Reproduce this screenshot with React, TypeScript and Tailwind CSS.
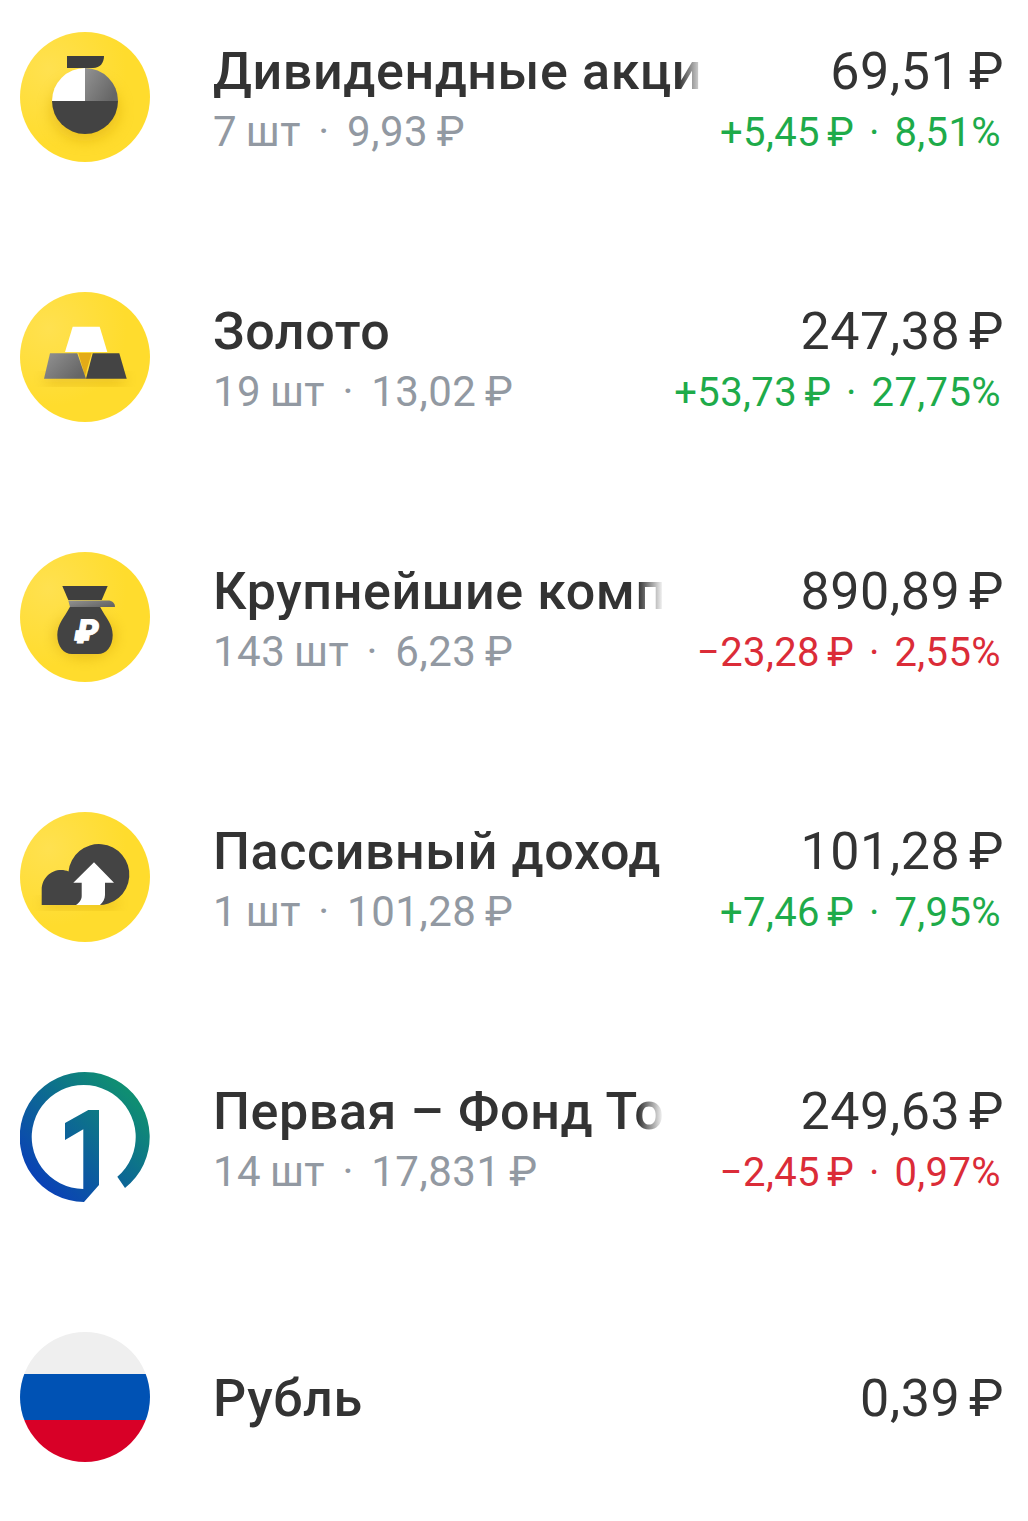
import React from 'react';

interface Row {
  name: string;
  titleWidth?: number;
  sub?: string;
  price: string;
  change?: string;
  up?: boolean;
  icon: React.ReactNode;
}

function YellowCircle({ id, children }: { id: string; children: React.ReactNode }) {
  return (
    <svg width="130" height="130" viewBox="0 0 130 130" className="block">
      <defs>
        <radialGradient id={`${id}-bg`} cx="0.22" cy="0.28" r="0.6">
          <stop offset="0" stopColor="#FFE150" />
          <stop offset="1" stopColor="#FFDC2D" />
        </radialGradient>
        <linearGradient id={`${id}-grey`} x1="0" y1="0" x2="1" y2="0.6">
          <stop offset="0" stopColor="#929292" />
          <stop offset="1" stopColor="#666666" />
        </linearGradient>
        <filter id={`${id}-blur`} x="-30%" y="-30%" width="160%" height="160%">
          <feGaussianBlur stdDeviation="7" />
        </filter>
      </defs>
      <circle cx="65" cy="65" r="65" fill={`url(#${id}-bg)`} />
      {children}
    </svg>
  );
}

function DividendIcon() {
  return (
    <YellowCircle id="div">
      <ellipse cx="65" cy="78" rx="35" ry="31" fill="#d9a90f" opacity="0.5" filter="url(#div-blur)" />
      <path d="M47 24H84C84 31 80 36 73 36H47Z" fill="#3d3d3d" />
      <path d="M65 69V36A33 33 0 0 0 32 69Z" fill="#ffffff" />
      <path d="M65 69V36A33 33 0 0 1 98 69Z" fill="url(#div-grey)" />
      <path d="M32 69A33 33 0 0 0 98 69Z" fill="#434343" />
    </YellowCircle>
  );
}

function GoldIcon() {
  return (
    <YellowCircle id="gold">
      <rect x="26" y="82" width="78" height="10" fill="#c9980c" opacity="0.45" filter="url(#gold-blur)" />
      <path d="M52.7 34.7H79.7L87.3 60H45Z" fill="#ffffff" />
      <path d="M58.3 61H71.7L65 84Z" fill="#e3ab17" />
      <path d="M30 61.3H57.3L66 86.7H24Z" fill="url(#gold-grey)" />
      <path d="M72.7 61.3H99.3L106.7 86.7H66Z" fill="#444444" />
    </YellowCircle>
  );
}

function BagIcon() {
  return (
    <YellowCircle id="bag">
      <ellipse cx="65" cy="84" rx="30" ry="22" fill="#c9980c" opacity="0.45" filter="url(#bag-blur)" />
      <path d="M42.3 34H87.7L81.7 48H48.3Z" fill="#3f3f3f" />
      <path d="M50 54.7C44 66 37.3 72 37.3 83C37.3 95 44 102 52 102H78C86 102 92.7 95 92.7 83C92.7 72 86 66 80 54.7Z" fill="#434343" />
      <path d="M48.3 48.5H88C92 48.5 95 51 95 55H50Z" fill="url(#bag-grey)" />
      <text
        transform="translate(65 91) skewX(-10)"
        textAnchor="middle"
        fill="#ffffff"
        stroke="#ffffff"
        strokeWidth="1"
        fontSize="33"
        fontWeight="900"
        fontFamily="Roboto, sans-serif"
      >
        ₽
      </text>
    </YellowCircle>
  );
}

function CloudIcon() {
  return (
    <YellowCircle id="cloud">
      <rect x="24" y="86" width="72" height="10" fill="#c9980c" opacity="0.45" filter="url(#cloud-blur)" />
      <path d="M21.7 93V78C21.7 66 31 58 41 58C44 58 46.5 58.5 48.5 59.5A30.5 30.5 0 1 1 76.7 93Z" fill="#444444" />
      <path d="M74 50.3L53.3 70.7H61.7V84C61.7 88 59 91 56 93H80C83 90 85 87 85 83V70.7H94Z" fill="#ffffff" />
    </YellowCircle>
  );
}

function FundIcon() {
  return (
    <svg width="130" height="130" viewBox="0 0 130 130" className="block">
      <defs>
        <linearGradient id="fund" gradientUnits="userSpaceOnUse" x1="22" y1="115" x2="112" y2="25">
          <stop offset="0" stopColor="#0A41B6" />
          <stop offset="1" stopColor="#0F8E72" />
        </linearGradient>
      </defs>
      <path
        d="M64 130A65 65 0 1 1 105 116L97.3 104.7A52 52 0 1 0 63.3 117V57.3L45 68V51L68.3 38H79V113Z"
        fill="url(#fund)"
      />
    </svg>
  );
}

function FlagIcon() {
  return (
    <div className="flex h-[130px] w-[130px] flex-col overflow-hidden rounded-full">
      <div className="h-[42px] bg-[#EFEFEF]" />
      <div className="h-[46px] bg-[#0052B4]" />
      <div className="flex-1 bg-[#D80027]" />
    </div>
  );
}

const rows: Row[] = [
  {
    name: 'Дивидендные акции',
    titleWidth: 492,
    sub: '7 шт  ·  9,93 ₽',
    price: '69,51 ₽',
    change: '+5,45 ₽  ·  8,51%',
    up: true,
    icon: <DividendIcon />,
  },
  {
    name: 'Золото',
    sub: '19 шт  ·  13,02 ₽',
    price: '247,38 ₽',
    change: '+53,73 ₽  ·  27,75%',
    up: true,
    icon: <GoldIcon />,
  },
  {
    name: 'Крупнейшие компании',
    titleWidth: 451,
    sub: '143 шт  ·  6,23 ₽',
    price: '890,89 ₽',
    change: '−23,28 ₽  ·  2,55%',
    up: false,
    icon: <BagIcon />,
  },
  {
    name: 'Пассивный доход',
    sub: '1 шт  ·  101,28 ₽',
    price: '101,28 ₽',
    change: '+7,46 ₽  ·  7,95%',
    up: true,
    icon: <CloudIcon />,
  },
  {
    name: 'Первая – Фонд Топ',
    titleWidth: 451,
    sub: '14 шт  ·  17,831 ₽',
    price: '249,63 ₽',
    change: '−2,45 ₽  ·  0,97%',
    up: false,
    icon: <FundIcon />,
  },
  {
    name: 'Рубль',
    price: '0,39 ₽',
    icon: <FlagIcon />,
  },
];

export default function App() {
  return (
    <div className="flex min-h-[1521px] flex-col gap-[130px] bg-white pt-[32px] pr-[24px] pl-[20px] font-['Roboto',sans-serif]">
      {rows.map(row => (
        <div key={row.name} className="flex h-[130px] items-center">
          <div className="mr-[63px] shrink-0">{row.icon}</div>
          <div className={`flex min-w-0 flex-1 flex-col gap-[8px] ${row.sub ? 'pt-[7px]' : 'pt-[2px]'}`}>
            <div className="flex justify-between">
              <div
                className={`relative text-[52px] leading-[57px] font-medium tracking-[0.6px] whitespace-nowrap text-[#333333] ${row.titleWidth ? 'overflow-hidden' : ''}`}
                style={row.titleWidth ? { width: row.titleWidth } : undefined}
              >
                {row.name}
                {row.titleWidth && (
                  <div className="absolute inset-y-0 right-0 w-[26px] bg-gradient-to-r from-white/0 to-white" />
                )}
              </div>
              <div className="text-[52px] leading-[57px] tracking-[0.6px] whitespace-nowrap text-[#333333] [word-spacing:-5px]">
                {row.price}
              </div>
            </div>
            {row.sub && (
              <div className="flex items-start justify-between pr-[3px]">
                <div className="text-[42px] leading-[48px] tracking-[0.5px] whitespace-pre text-[#9299A2] [word-spacing:-2.25px]">
                  {row.sub}
                </div>
                <div
                  className={`text-[40px] leading-[50px] tracking-[0.4px] whitespace-pre [word-spacing:-3px] ${row.up ? 'text-[#1EAB4A]' : 'text-[#DB2C38]'}`}
                >
                  {row.change}
                </div>
              </div>
            )}
          </div>
        </div>
      ))}
    </div>
  );
}
